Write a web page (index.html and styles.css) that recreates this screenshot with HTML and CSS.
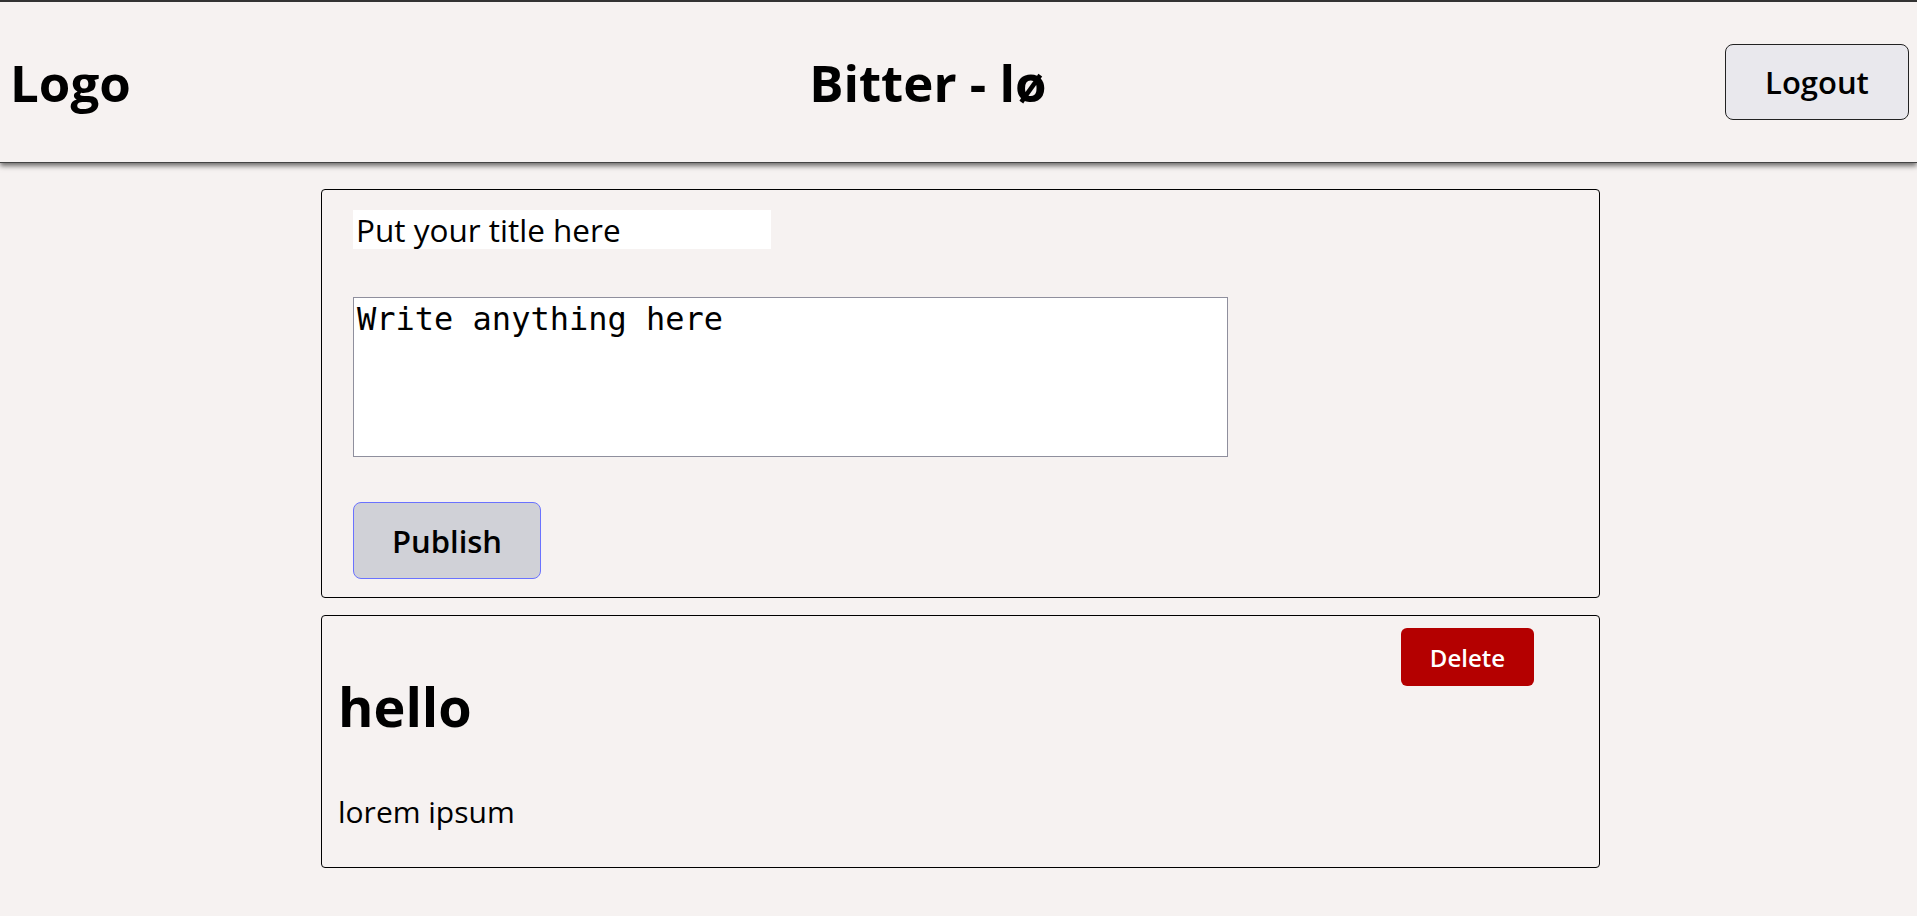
FILE: index.html
```html
<!DOCTYPE html>
<html lang="en">
<head>
<meta charset="utf-8">
<title>Bitter - lø</title>
<link rel="stylesheet" href="styles.css">
</head>
<body>
<header class="topbar">
  <h1 class="logo">Logo</h1>
  <h1 class="site-title">Bitter - lø</h1>
  <button class="btn btn-logout" type="button">Logout</button>
</header>
<main class="page">
  <div class="feed">
    <form class="card composer">
      <input class="title-input" type="text" value="Put your title here">
      <textarea class="body-input">Write anything here</textarea>
      <button class="btn btn-publish" type="button">Publish</button>
    </form>
    <article class="card post">
      <h2 class="post-title">hello</h2>
      <p class="post-body">lorem ipsum</p>
      <button class="btn-delete" type="button">Delete</button>
    </article>
  </div>
</main>
</body>
</html>
```
FILE: styles.css
```css
html, body {
  margin: 0;
  padding: 0;
  background: #f6f2f1;
  font-family: "Open Sans", "Noto Sans", sans-serif;
  color: #000;
}

.topbar {
  box-sizing: border-box;
  height: 163px;
  border-top: 2px solid #333;
  border-bottom: 1px solid #444;
  display: flex;
  justify-content: space-between;
  align-items: center;
  padding: 0 8px 0 10px;
  background: #f6f2f1;
  box-shadow: 0 3px 5px rgba(0, 0, 0, 0.55);
  position: relative;
}

.logo, .site-title {
  margin: 0;
  font-size: 51px;
  font-weight: 700;
  line-height: 1;
}

.btn {
  font-family: inherit;
  font-size: 31px;
  font-weight: 600;
  color: #000;
  border-radius: 8px;
  cursor: pointer;
}

.btn-logout {
  width: 184px;
  height: 76px;
  background: #e9e8ed;
  border: 1px solid #222;
}

.page {
  padding-left: 4px;
}

.feed {
  width: 1279px;
  margin: 26px auto 0;
  display: flex;
  flex-direction: column;
  gap: 17px;
}

.card {
  box-sizing: border-box;
  border: 1px solid #000;
  border-radius: 4px;
}

.composer {
  display: flex;
  flex-direction: column;
  align-items: flex-start;
  padding: 20px 31px 18px;
  height: 409px;
}

.title-input {
  box-sizing: border-box;
  width: 418px;
  height: 39px;
  border: none;
  padding: 1px 3px;
  background: #fff;
  font-family: inherit;
  font-size: 31.5px;
  color: #000;
  outline: none;
}

.body-input {
  box-sizing: border-box;
  width: 875px;
  height: 160px;
  margin-top: 48px;
  border: 1px solid #8f8f9d;
  padding: 2px 3px;
  background: #fff;
  font-family: "DejaVu Sans Mono", monospace;
  font-size: 32px;
  resize: none;
  outline: none;
}

.btn-publish {
  width: 188px;
  height: 77px;
  margin-top: 45px;
  background: #d0d1d7;
  border: 1px solid #6a72ff;
}

.post {
  height: 253px;
  padding: 12px 65px 0 16px;
  display: grid;
  grid-template-columns: 1fr auto;
  grid-template-rows: auto auto;
  align-content: start;
}

.btn-delete {
  grid-column: 2;
  grid-row: 1 / 3;
  align-self: start;
  width: 133px;
  height: 58px;
  background: #b40000;
  color: #fff;
  border: none;
  border-radius: 6px;
  font-family: inherit;
  font-size: 24px;
  font-weight: 600;
  cursor: pointer;
}

.post-title {
  grid-column: 1;
  grid-row: 1;
  margin: 46px 0 0;
  font-size: 54px;
  font-weight: 700;
  line-height: 1.2;
}

.post-body {
  grid-column: 1;
  grid-row: 2;
  margin: 55px 0 0;
  font-size: 30px;
  line-height: 1.2;
}
```
